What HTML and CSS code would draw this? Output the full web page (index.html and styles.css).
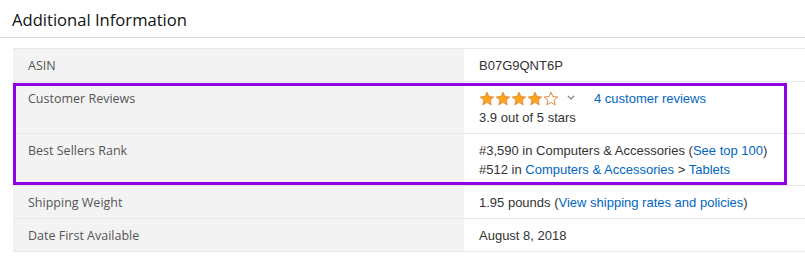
FILE: index.html
```html
<!DOCTYPE html>
<html>
<head>
<meta charset="utf-8">
<link rel="stylesheet" href="styles.css">
</head>
<body>
<h2 class="heading">Additional Information</h2>
<div class="table-wrap">
  <table class="info">
    <tr>
      <th class="label">ASIN</th>
      <td class="value">B07G9QNT6P</td>
    </tr>
    <tr>
      <th class="label">Customer Reviews</th>
      <td class="value">
        <div class="stars-line">
          <span class="stars">
            <svg width="80" height="16" viewBox="0 0 80 16">
              <defs>
                <path id="star" d="M8 1.2 L9.9 5.6 L14.7 6 L11.05 9.15 L12.15 13.85 L8 11.35 L3.85 13.85 L4.95 9.15 L1.3 6 L6.1 5.6 Z"/>
              </defs>
              <use href="#star" x="0" fill="#ffa41c" stroke="#de7921" stroke-width="0.8"/>
              <use href="#star" x="16" fill="#ffa41c" stroke="#de7921" stroke-width="0.8"/>
              <use href="#star" x="32" fill="#ffa41c" stroke="#de7921" stroke-width="0.8"/>
              <use href="#star" x="48" fill="#ffa41c" stroke="#de7921" stroke-width="0.8"/>
              <use href="#star" x="64" fill="#ffffff" stroke="#de7921" stroke-width="0.9"/>
            </svg>
          </span>
          <svg class="chevron" width="8" height="5" viewBox="0 0 8 5"><path d="M0.8 0.8 L4 4 L7.2 0.8" fill="none" stroke="#777" stroke-width="1.1"/></svg>
          <a class="link reviews" href="#">4 customer reviews</a>
        </div>
        <div>3.9 out of 5 stars</div>
      </td>
    </tr>
    <tr>
      <th class="label">Best Sellers Rank</th>
      <td class="value">
        <div>#3,590 in Computers &amp; Accessories (<a class="link" href="#">See top 100</a>)</div>
        <div>#512 in <a class="link" href="#">Computers &amp; Accessories</a> &gt; <a class="link" href="#">Tablets</a></div>
      </td>
    </tr>
    <tr>
      <th class="label">Shipping Weight</th>
      <td class="value">1.95 pounds (<a class="link" href="#">View shipping rates and policies</a>)</td>
    </tr>
    <tr>
      <th class="label">Date First Available</th>
      <td class="value">August 8, 2018</td>
    </tr>
  </table>
  <div class="highlight"></div>
</div>
</body>
</html>
```
FILE: styles.css
```css
html, body {
  margin: 0;
  padding: 0;
  background: #fff;
  overflow: hidden;
}

.heading {
  margin: 0;
  padding: 8px 0 0 12px;
  height: 29px;
  font-family: "Open Sans", "Noto Sans", sans-serif;
  font-weight: 400;
  font-size: 16.6px;
  line-height: 24px;
  color: #111;
  border-bottom: 1px solid #d5d5d5;
}

.table-wrap {
  position: relative;
  margin: 10px 0 0 13px;
  width: 800px;
}

.info {
  border-collapse: collapse;
  width: 800px;
  border-top: 1px solid #e7e7e7;
}

.info tr {
  border-bottom: 1px solid #e7e7e7;
}

.label {
  width: 421px;
  background: #f3f3f3;
  text-align: left;
  vertical-align: top;
  font-weight: 400;
  font-family: "Open Sans", "Noto Sans", sans-serif;
  font-size: 12.5px;
  line-height: 19px;
  color: #555;
  padding: 7px 15px 6px 15px;
}

.value {
  vertical-align: top;
  font-family: "Liberation Sans", Arial, sans-serif;
  font-size: 13px;
  line-height: 19px;
  color: #333;
  padding: 7px 15px 6px 15px;
}

.link {
  color: #0066c0;
  text-decoration: none;
}

.stars-line {
  display: flex;
  align-items: center;
  height: 19px;
}

.stars {
  display: flex;
  width: 80px;
  height: 16px;
}

.chevron {
  margin-left: 8px;
  margin-top: -2px;
}

.reviews {
  margin-left: 19px;
}

.highlight {
  position: absolute;
  left: 0;
  top: 35px;
  width: 768px;
  height: 96px;
  border: 3px solid #9100e6;
  pointer-events: none;
}
```
